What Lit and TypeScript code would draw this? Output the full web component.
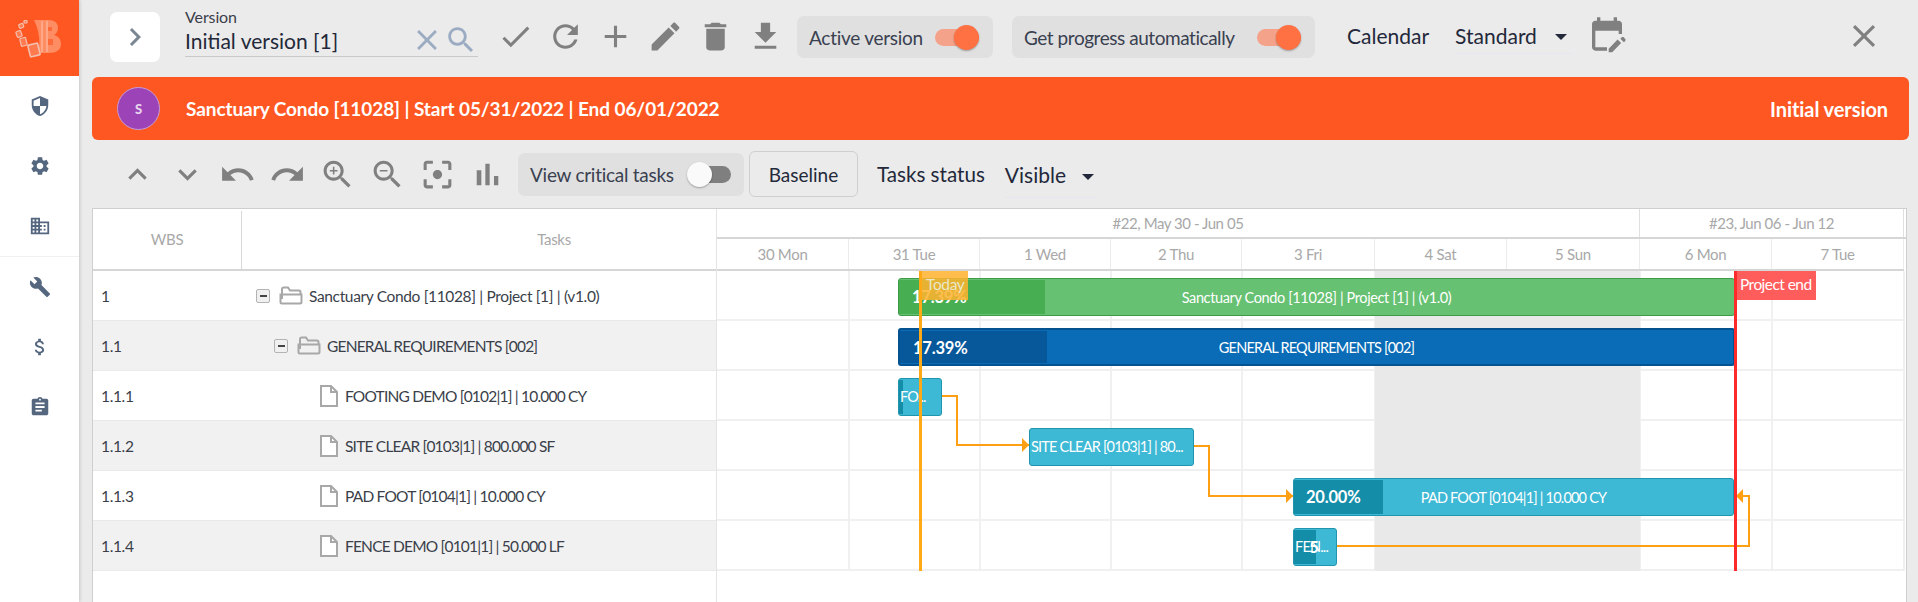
import { LitElement, html, css } from "lit";
import { customElement } from "lit/decorators.js";

const P: Record<string, string> = {
  chevR: "M8.59 16.59L13.17 12 8.59 7.41 10 6l6 6-6 6z",
  up: "M12 8l-6 6 1.41 1.41L12 10.83l4.59 4.58L18 14z",
  down: "M16.59 8.59L12 13.17 7.41 8.59 6 10l6 6 6-6z",
  check: "M21 7L9 19l-5.5-5.5 1.41-1.41L9 16.17 19.59 5.59 21 7z",
  refresh: "M17.65 6.35C16.2 4.9 14.21 4 12 4c-4.42 0-7.99 3.58-7.99 8s3.57 8 7.99 8c3.73 0 6.84-2.55 7.73-6h-2.08c-.82 2.33-3.04 4-5.65 4-3.31 0-6-2.69-6-6s2.69-6 6-6c1.66 0 3.14.69 4.22 1.78L13 11h7V4l-2.35 2.35z",
  plus: "M19 13h-6v6h-2v-6H5v-2h6V5h2v6h6v2z",
  pencil: "M3 17.25V21h3.75L17.81 9.94l-3.75-3.75L3 17.25zM20.71 7.04c.39-.39.39-1.02 0-1.41l-2.34-2.34c-.39-.39-1.02-.39-1.41 0l-1.83 1.83 3.75 3.75 1.83-1.83z",
  trash: "M6 19c0 1.1.9 2 2 2h8c1.1 0 2-.9 2-2V7H6v12zM19 4h-3.5l-1-1h-5l-1 1H5v2h14V4z",
  download: "M19 9h-4V3H9v6H5l7 7 7-7zM5 18v2h14v-2H5z",
  close: "M19 6.41L17.59 5 12 10.59 6.41 5 5 6.41 10.59 12 5 17.59 6.41 19 12 13.41 17.59 19 19 17.59 13.41 12z",
  search: "M15.5 14h-.79l-.28-.27C15.41 12.59 16 11.11 16 9.5 16 5.91 13.09 3 9.5 3S3 5.91 3 9.5 5.91 16 9.5 16c1.61 0 3.09-.59 4.23-1.57l.27.28v.79l5 4.99L20.49 19l-4.99-5zm-6 0C7.01 14 5 11.99 5 9.5S7.01 5 9.5 5 14 7.01 14 9.5 11.99 14 9.5 14z",
  zoomIn: "M15.5 14h-.79l-.28-.27C15.41 12.59 16 11.11 16 9.5 16 5.91 13.09 3 9.5 3S3 5.91 3 9.5 5.91 16 9.5 16c1.61 0 3.09-.59 4.23-1.57l.27.28v.79l5 4.99L20.49 19l-4.99-5zm-6 0C7.01 14 5 11.99 5 9.5S7.01 5 9.5 5 14 7.01 14 9.5 11.99 14 9.5 14zM12 10h-2v2H9v-2H7V9h2V7h1v2h2v1z",
  zoomOut: "M15.5 14h-.79l-.28-.27C15.41 12.59 16 11.11 16 9.5 16 5.91 13.09 3 9.5 3S3 5.91 3 9.5 5.91 16 9.5 16c1.61 0 3.09-.59 4.23-1.57l.27.28v.79l5 4.99L20.49 19l-4.99-5zm-6 0C7.01 14 5 11.99 5 9.5S7.01 5 9.5 5 14 7.01 14 9.5 11.99 14 9.5 14zM7 9h5v1H7z",
  undo: "M12.5 8c-2.65 0-5.05.99-6.9 2.6L2 7v9h9l-3.62-3.62c1.39-1.16 3.16-1.88 5.12-1.88 3.54 0 6.55 2.31 7.6 5.5l2.37-.78C21.08 11.03 17.15 8 12.5 8z",
  redo: "M18.4 10.6C16.55 8.99 14.15 8 11.5 8c-4.65 0-8.58 3.03-9.96 7.22L3.9 16c1.05-3.19 4.05-5.5 7.6-5.5 1.95 0 3.73.72 5.12 1.88L13 16h9V7l-3.6 3.6z",
  focus: "M5 15H3v4c0 1.1.9 2 2 2h4v-2H5v-4zM5 5h4V3H5c-1.1 0-2 .9-2 2v4h2V5zm14-2h-4v2h4v4h2V5c0-1.1-.9-2-2-2zm0 16h-4v2h4c1.1 0 2-.9 2-2v-4h-2v4zM12 9c-1.66 0-3 1.34-3 3s1.34 3 3 3 3-1.34 3-3-1.34-3-3-3z",
  bars: "M5 9.2h3V19H5zM10.6 5h2.8v14h-2.8zm5.6 8H19v6h-2.8z",
  shield: "M12 1L3 5v6c0 5.55 3.84 10.74 9 12 5.16-1.26 9-6.45 9-12V5l-9-4zm0 10.99h7c-.53 4.12-3.28 7.79-7 8.94V12H5V6.3l7-3.11v8.8z",
  gear: "M19.14 12.94c.04-.3.06-.61.06-.94 0-.32-.02-.64-.07-.94l2.03-1.58c.18-.14.23-.41.12-.61l-1.92-3.32c-.12-.22-.37-.29-.59-.22l-2.39.96c-.5-.38-1.03-.7-1.62-.94l-.36-2.54c-.04-.24-.24-.41-.48-.41h-3.84c-.24 0-.43.17-.47.41l-.36 2.54c-.59.24-1.13.57-1.62.94l-2.39-.96c-.22-.08-.47 0-.59.22L2.74 8.87c-.12.21-.08.47.12.61l2.03 1.58c-.05.3-.09.63-.09.94s.02.64.07.94l-2.03 1.58c-.18.14-.23.41-.12.61l1.92 3.32c.12.22.37.29.59.22l2.39-.96c.5.38 1.03.7 1.62.94l.36 2.54c.05.24.24.41.48.41h3.84c.24 0 .44-.17.47-.41l.36-2.54c.59-.24 1.13-.56 1.62-.94l2.39.96c.22.08.47 0 .59-.22l1.92-3.32c.12-.22.07-.47-.12-.61l-2.01-1.58zM12 15.6c-1.98 0-3.6-1.62-3.6-3.6s1.62-3.6 3.6-3.6 3.6 1.62 3.6 3.6-1.62 3.6-3.6 3.6z",
  domain: "M12 7V3H2v18h20V7H12zM6 19H4v-2h2v2zm0-4H4v-2h2v2zm0-4H4V9h2v2zm0-4H4V5h2v2zm4 12H8v-2h2v2zm0-4H8v-2h2v2zm0-4H8V9h2v2zm0-4H8V5h2v2zm10 12h-8v-2h2v-2h-2v-2h2v-2h-2V9h8v10zm-2-8h-2v2h2v-2zm0 4h-2v2h2v-2z",
  wrench: "M22.7 19l-9.1-9.1c.9-2.3.4-5-1.5-6.9-2-2-5-2.4-7.4-1.3L9 6 6 9 1.6 4.7C.4 7.1.9 10.1 2.9 12.1c1.9 1.9 4.6 2.4 6.9 1.5l9.1 9.1c.4.4 1 .4 1.4 0l2.3-2.3c.5-.4.5-1.1.1-1.4z",
  money: "M11.8 10.9c-2.27-.59-3-1.2-3-2.15 0-1.09 1.01-1.85 2.7-1.85 1.78 0 2.44.85 2.5 2.1h2.21c-.07-1.72-1.12-3.3-3.21-3.81V3h-3v2.16c-1.94.42-3.5 1.68-3.5 3.61 0 2.31 1.91 3.46 4.7 4.13 2.5.6 3 1.48 3 2.41 0 .69-.49 1.79-2.7 1.79-2.06 0-2.87-.92-2.98-2.1h-2.2c.12 2.19 1.76 3.42 3.68 3.83V21h3v-2.15c1.95-.37 3.5-1.5 3.5-3.55 0-2.84-2.43-3.81-4.7-4.4z",
  clip: "M19 3h-4.18C14.4 1.84 13.3 1 12 1c-1.3 0-2.4.84-2.82 2H5c-1.1 0-2 .9-2 2v14c0 1.1.9 2 2 2h14c1.1 0 2-.9 2-2V5c0-1.1-.9-2-2-2zm-7 0c.55 0 1 .45 1 1s-.45 1-1 1-1-.45-1-1 .45-1 1-1zm2 14H7v-2h7v2zm3-4H7v-2h10v2zm0-4H7V7h10v2z",
  calEdit: "M5 10h14v2h2V6c0-1.1-.9-2-2-2h-1V2h-2v2H8V2H6v2H5c-1.11 0-1.99.9-1.99 2L3 20c0 1.1.89 2 2 2h7v-2H5V10zM22.84 16.28l-.71.71-2.12-2.12.71-.71c.39-.39 1.02-.39 1.41 0l.71.71c.39.39.39 1.02 0 1.41zM18.36 15.34l2.12 2.12L15.12 23H13v-2.12l5.36-5.54z",
};

const icon = (name: string, cls = "") =>
  html`<svg class="ic ${cls}" viewBox="0 0 24 24"><path d=${P[name]}></path></svg>`;

const toggle = (on: boolean) =>
  html`<span class="toggle ${on ? "on" : "off"}"><span class="track"></span><span class="thumb"></span></span>`;

const rows = [
  { wbs: "1", name: "Sanctuary Condo [11028] | Project [1] | (v1.0)", kind: "folder", indent: 163, caps: false },
  { wbs: "1.1", name: "GENERAL REQUIREMENTS [002]", kind: "folder", indent: 181, caps: true },
  { wbs: "1.1.1", name: "FOOTING DEMO [0102|1] | 10.000 CY", kind: "file", indent: 227, caps: true },
  { wbs: "1.1.2", name: "SITE CLEAR [0103|1] | 800.000 SF", kind: "file", indent: 227, caps: true },
  { wbs: "1.1.3", name: "PAD FOOT [0104|1] | 10.000 CY", kind: "file", indent: 227, caps: true },
  { wbs: "1.1.4", name: "FENCE DEMO [0101|1] | 50.000 LF", kind: "file", indent: 227, caps: true },
];

const days = [
  ["30 Mon", 132], ["31 Tue", 131], ["1 Wed", 131], ["2 Thu", 131], ["3 Fri", 133],
  ["4 Sat", 132], ["5 Sun", 133], ["6 Mon", 132], ["7 Tue", 132],
] as [string, number][];
const dayX = days.reduce<number[]>((a, d) => [...a, a[a.length - 1] + d[1]], [0]);

const bars = [
  { cls: "green", x: 181, w: 837, row: 0, prog: 146, pct: "17.39%", pctX: 13, label: "Sanctuary Condo [11028] | Project [1] | (v1.0)", caps: false },
  { cls: "blue", x: 181, w: 837, row: 1, prog: 147, pct: "17.39%", pctX: 13, label: "GENERAL REQUIREMENTS [002]", caps: true },
  { cls: "cyan", x: 181, w: 44, row: 2, prog: 4, left: "FO...", caps: true },
  { cls: "cyan", x: 312, w: 165, row: 3, prog: 0, left: "SITE CLEAR [0103|1] | 80...", caps: true },
  { cls: "cyan", x: 576, w: 441, row: 4, prog: 89, pct: "20.00%", pctX: 12, label: "PAD FOOT [0104|1] | 10.000 CY", caps: true },
  { cls: "cyan", x: 576, w: 44, row: 5, prog: 22, left: "FEN...", over: "5", caps: true },
];

@customElement("app-root")
export class AppRoot extends LitElement {
  static styles = css`
    :host {
      display: flex; width: 1918px; height: 602px; overflow: hidden;
      background: #ebebeb; font-family: Lato, "Open Sans", sans-serif; color: #2c3240;
    }
    * { box-sizing: border-box; }
    .ic { display: block; fill: currentColor; flex: none; }

    .side { width: 79px; flex: none; background: #fff; box-shadow: 1px 0 3px rgba(0,0,0,.16); z-index: 2; }
    .logo { height: 76px; background: #ff5722; display: flex; }
    .logo svg { width: 79px; height: 76px; filter: blur(.5px); }
    .side-item { height: 60px; display: flex; align-items: center; justify-content: center; color: #55677f; }
    .side-item .ic { width: 22px; height: 22px; }
    .side-group { border-bottom: 1px solid #f0f0f0; }

    .main { flex: 1; min-width: 0; display: flex; flex-direction: column; padding: 0 9px 0 13px; }

    .top { height: 77px; flex: none; display: flex; align-items: flex-start; padding-left: 18px; }
    .expand { width: 50px; height: 50px; margin-top: 12px; background: #fff; border-radius: 7px; display: flex; align-items: center; justify-content: center; color: #7c8794; }
    .expand .ic { width: 36px; height: 36px; }
    .version { width: 293px; margin-left: 25px; height: 57px; border-bottom: 1px solid #c9c9c9; position: relative; padding-top: 8px; }
    .version .lbl { font-size: 16px; line-height: 18px; color: #3a3f4a; letter-spacing: -.1px; }
    .version .val { font-size: 21px; line-height: 26px; margin-top: 2px; color: #23283a; }
    .version .acts { position: absolute; right: 0; top: 23px; display: flex; color: #9aabc2; gap: 0; }
    .version .acts .ic { width: 34px; height: 34px; }
    .tools { display: flex; margin-left: 12px; color: #808080; padding-top: 11px; }
    .slot { width: 50px; height: 50px; display: flex; align-items: center; justify-content: center; }
    .slot .ic { width: 37px; height: 37px; }
    .pill { height: 42px; margin-top: 16px; background: #e0e0e0; border-radius: 7px; display: flex; align-items: center; padding: 0 0 0 12px; font-size: 19px; letter-spacing: -.27px; color: #3a4050; }
    .pill.a { width: 196px; margin-left: 7px; }
    .pill.b { width: 303px; margin-left: 19px; letter-spacing: -.45px; }
    .toggle { position: relative; width: 44px; height: 25px; flex: none; display: block; margin-left: auto; margin-right: 14px; }
    .track { position: absolute; left: 0; right: 0; top: 4px; height: 17px; border-radius: 9px; }
    .thumb { position: absolute; top: 0; width: 25px; height: 25px; border-radius: 50%; box-shadow: 0 1px 2px rgba(0,0,0,.3); }
    .on .track { background: #f4a38a; }
    .on .thumb { background: #ff7043; right: 0; }
    .off .track { background: #7f7f7f; }
    .off .thumb { background: #fafafa; left: 0; }
    .txt { font-size: 21px; line-height: 24px; color: #23283a; }
    .cal { margin-left: 32px; margin-top: 24px; }
    .sel { position: relative; height: 36px; display: flex; align-items: center; border-bottom: 1px solid #e6e6f0; font-size: 21px; color: #23283a; }
    .sel.s1 { width: 117px; margin-left: 26px; margin-top: 18px; }
    .arrow { position: absolute; right: 5px; top: 16px; width: 0; height: 0; border-left: 6px solid transparent; border-right: 6px solid transparent; border-top: 6px solid #23283a; }
    .calicon { margin-left: 15px; margin-top: 14px; color: #808080; }
    .calicon .ic { width: 40px; height: 40px; }
    .x { margin-left: auto; margin-right: 26px; margin-top: 17px; color: #808080; }
    .x .ic { width: 38px; height: 38px; }

    .banner { height: 63px; flex: none; background: #ff5722; border-radius: 6px; display: flex; align-items: center; padding: 0 21px 0 25px; color: #fff; font-weight: 700; font-size: 19px; letter-spacing: -.08px; }
    .avatar { width: 43px; height: 43px; border-radius: 50%; background: #9c43b8; border: 1px solid #c79bd6; display: flex; align-items: center; justify-content: center; font-size: 13px; font-weight: 900; color: #e8d5ee; margin-right: 26px; }
    .grow { flex: 1; }
    .ban-r { font-size: 20px; }

    .tb2 { height: 68px; flex: none; display: flex; align-items: center; padding-left: 20px; color: #808080; }
    .pill.c { width: 226px; height: 43px; margin: 0 0 0 6px; flex: none; }
    .pill.c .toggle { width: 44px; margin-right: 13px; }
    .pill.c .track { top: 4px; left: 8px; }
    .btn { width: 109px; height: 46px; margin-left: 5px; border: 1px solid #cfcfcf; border-radius: 6px; display: flex; align-items: center; justify-content: center; font-size: 19px; color: #23283a; }
    .tb2 .txt { margin-left: 19px; font-size: 20.6px; }
    .sel.s2 { width: 93px; height: 46px; margin-left: 20px; margin-top: 1px; }
    .sel.s2 .arrow { top: 22px; right: 4px; }

    .gantt { flex: 1; min-height: 0; background: #fff; border: 1px solid #cfcfcf; border-bottom: 0; display: flex; margin-right: 2px; }
    .left { width: 624px; flex: none; border-right: 1px solid #e4e4e4; }
    .lhead { height: 62px; display: flex; border-bottom: 2px solid #d6d6d6; color: #a8a8a8; font-size: 15px; letter-spacing: -.3px; }
    .lhead > div { display: flex; align-items: center; justify-content: center; }
    .c-wbs { width: 149px; border-right: 1px solid #d8d8d8; margin-top: 2px; padding-bottom: 2px; }
    .c-task { flex: 1; padding-left: 150px; }
    .row { height: 50px; display: flex; align-items: center; border-bottom: 1px solid #e9e9e9; font-size: 15.5px; letter-spacing: -.35px; color: #3a3f4a; position: relative; }
    .row.caps .t { letter-spacing: -.8px; }
    .row:nth-child(even) { background: #f1f1f1; }
    .row .w { position: absolute; left: 8px; }
    .row .t { display: flex; align-items: center; white-space: nowrap; }
    .minus { width: 14px; height: 14px; border: 1.5px solid #b4b4b4; border-radius: 2px; background: #f0f0f0; display: flex; align-items: center; justify-content: center; margin-right: 9px; }
    .minus::after { content: ""; width: 7px; height: 2px; background: #444; }
    .folder { width: 24px; height: 19px; margin-right: 6px; fill: none; stroke: #a8a8a8; stroke-width: 2; }
    .file { width: 18px; height: 22px; margin-right: 7px; fill: #fff; stroke: #a8a8a8; stroke-width: 2; }

    .right { flex: 1; min-width: 0; }
    .weeks { height: 30px; display: flex; border-bottom: 2px solid #d6d6d6; color: #a8a8a8; font-size: 15px; letter-spacing: -.45px; }
    .weeks > div { display: flex; align-items: center; justify-content: center; }
    .w1 { width: 923px; border-right: 1px solid #e0e0e0; }
    .w2 { width: 264px; border-right: 1px solid #e0e0e0; }
    .dayrow { height: 32px; display: flex; border-bottom: 2px solid #d6d6d6; width: 1187px; }
    .dayrow > div { display: flex; align-items: center; justify-content: center; border-right: 1px solid #ececec; color: #a8a8a8; font-size: 15px; letter-spacing: -.3px; }
    .canvas { position: relative; height: 300px; }
    .line-h { height: 50px; border-bottom: 2px solid #f0f0f0; width: 1187px; }
    .line-v { position: absolute; top: 0; bottom: 0; width: 2px; background: #f0f0f0; }
    .weekend { position: absolute; top: 0; bottom: 0; left: 658px; width: 265px; background: #e8e8e8; opacity: .96; }
    .bar { position: absolute; height: 38px; border-radius: 3px; border: 1px solid; overflow: hidden; color: #fff; font-size: 14.5px; letter-spacing: -.37px; display: flex; align-items: center; justify-content: center; white-space: nowrap; }
    .bar.caps { letter-spacing: -.8px; }
    .bar .prog { position: absolute; left: 0; top: 1px; bottom: 1px; }
    .bar .pct { position: absolute; font-weight: 700; font-size: 16.5px; letter-spacing: -.2px; top: 7px; line-height: 22px; }
    .bar .lab { position: relative; }
    .bar .lft { position: absolute; left: 1px; top: 7px; line-height: 22px; }
    .bar .ovr { position: absolute; left: 15px; top: 7px; line-height: 22px; font-weight: 700; font-size: 17px; }
    .green { background: #66c172; border-color: #3f9a4a; border-width: 1.5px; }
    .green .prog { background: #48ae52; }
    .blue { background: #0a6cb6; border-color: #04528f; border-width: 2px; }
    .blue .prog { background: #06589b; }
    .cyan { background: #3db8d5; border-color: #2295ae; }
    .cyan .prog { background: #148da8; }
    .tag { position: absolute; top: 0; height: 29px; font-size: 15.5px; letter-spacing: -.35px; line-height: 26px; white-space: nowrap; }
    .today-tag { left: 203px; width: 48px; background: rgba(255,178,48,.86); color: #eae8c8; padding-left: 6px; }
    .end-tag { left: 1018px; width: 81px; background: #ff5c5c; color: #fff; padding-left: 5px; letter-spacing: -.55px; }
    .vline { position: absolute; top: 0; height: 300px; width: 3px; }
    .today { left: 202px; background: #ffa916; }
    .end { left: 1017px; background: #ff2b2b; }
    .links { position: absolute; left: 0; top: 0; width: 1188px; height: 300px; fill: none; stroke: #ff9f14; stroke-width: 2; overflow: visible; }
    .links polygon { fill: #ff9f14; stroke: none; }
  `;

  render() {
    return html`
      <aside class="side">
        <div class="logo">
          <svg viewBox="0 0 79 76">
            <path d="M34 20h14c7 0 10 3 10 8 0 3-2 6-4 7 4 1 7 4 7 9 0 6-5 9-12 9H38c3-10 1-23-4-33z" fill="#ff8d64"></path>
            <path d="M42 21v31M47 21v31" stroke="#ffa888" stroke-width="2" fill="none"></path>
            <path d="M48 27h4v4h-4zM48 39h5v6h-5z" fill="#ff6a3a"></path>
            <g fill="#ff7a4e" stroke="#f3bfae" stroke-width="1.2">
              <rect x="29" y="44" width="10" height="12" rx="1" transform="rotate(-14 34 50)" stroke-width="1.6"></rect>
              <rect x="20.5" y="38" width="6" height="8" rx="1" transform="rotate(-14 23 42)"></rect>
              <rect x="16.5" y="31" width="5" height="6" rx="1" transform="rotate(-20 19 34)"></rect>
              <rect x="19" y="24" width="4.5" height="4" rx="1" transform="rotate(-24 21 26)"></rect>
              <rect x="24" y="20.5" width="3" height="2.500" rx=".6"></rect>
            </g>
          </svg>
        </div>
        <div class="side-group">
          <div class="side-item">${icon("shield")}</div>
          <div class="side-item">${icon("gear")}</div>
          <div class="side-item">${icon("domain")}</div>
        </div>
        <div class="side-item">${icon("wrench")}</div>
        <div class="side-item">${icon("money")}</div>
        <div class="side-item">${icon("clip")}</div>
      </aside>

      <div class="main">
        <div class="top">
          <div class="expand">${icon("chevR")}</div>
          <div class="version">
            <div class="lbl">Version</div>
            <div class="val">Initial version [1]</div>
            <div class="acts">${icon("close")}${icon("search")}</div>
          </div>
          <div class="tools">
            ${["check", "refresh", "plus", "pencil", "trash", "download"].map((n) => html`<div class="slot">${icon(n)}</div>`)}
          </div>
          <div class="pill a">Active version ${toggle(true)}</div>
          <div class="pill b">Get progress automatically ${toggle(true)}</div>
          <div class="txt cal">Calendar</div>
          <div class="sel s1">Standard<span class="arrow"></span></div>
          <div class="calicon">${icon("calEdit")}</div>
          <div class="x">${icon("close")}</div>
        </div>

        <div class="banner">
          <div class="avatar">S</div>
          <div>Sanctuary Condo [11028] | Start 05/31/2022 | End 06/01/2022</div>
          <div class="grow"></div>
          <div class="ban-r">Initial version</div>
        </div>

        <div class="tb2">
          ${["up", "down", "undo", "redo", "zoomIn", "zoomOut", "focus", "bars"].map((n) => html`<div class="slot">${icon(n)}</div>`)}
          <div class="pill c">View critical tasks ${toggle(false)}</div>
          <div class="btn">Baseline</div>
          <div class="txt">Tasks status</div>
          <div class="sel s2">Visible<span class="arrow"></span></div>
        </div>

        <div class="gantt">
          <div class="left">
            <div class="lhead"><div class="c-wbs">WBS</div><div class="c-task">Tasks</div></div>
            <div>
              ${rows.map((r) => html`
                <div class="row ${r.caps ? "caps" : ""}">
                  <span class="w">${r.wbs}</span>
                  <span class="t" style="margin-left:${r.indent}px">
                    ${r.kind === "folder"
                      ? html`<span class="minus"></span>
                          <svg class="folder" viewBox="0 0 24 19"><path d="M3 13V3a1.5 1.5 0 0 1 1.5-1.5H9l2 3h9A1.5 1.5 0 0 1 21.500 6v2"></path><path d="M1.500 8.500h21V16a1.500 1.500 0 0 1-1.500 1.500H3A1.500 1.500 0 0 1 1.500 16z"></path></svg>`
                      : html`<svg class="file" viewBox="0 0 18 22"><path d="M1 1h10l6 6v14H1z"></path><path d="M11 1v6h6" fill="none"></path></svg>`}
                    ${r.name}
                  </span>
                </div>`)}
            </div>
          </div>
          <div class="right">
            <div class="weeks"><div class="w1">#22, May 30 - Jun 05</div><div class="w2">#23, Jun 06 - Jun 12</div></div>
            <div class="dayrow">${days.map(([d, w]) => html`<div style="width:${w}px">${d}</div>`)}</div>
            <div class="canvas">
              ${rows.map(() => html`<div class="line-h"></div>`)}
              ${dayX.slice(1).map((x) => html`<div class="line-v" style="left:${x - 1}px"></div>`)}
              <div class="weekend"></div>
              ${bars.map((b) => html`
                <div class="bar ${b.cls} ${b.caps ? "caps" : ""}" style="left:${b.x}px;width:${b.w}px;top:${b.row * 50 + 7}px">
                  ${b.prog ? html`<div class="prog" style="width:${b.prog}px"></div>` : ""}
                  ${b.pct ? html`<span class="pct" style="left:${b.pctX}px">${b.pct}</span>` : ""}
                  ${b.label ? html`<span class="lab">${b.label}</span>` : ""}
                  ${b.left ? html`<span class="lft">${b.left}</span>` : ""}
                  ${b.over ? html`<span class="ovr">${b.over}</span>` : ""}
                </div>`)}
              <svg class="links" viewBox="0 0 1188 300">
                <path d="M225 125h15v49h72"></path><polygon points="305,167 312,174 305,181"></polygon>
                <path d="M477 175h15v50h84"></path><polygon points="569,218 576,225 569,232"></polygon>
                <path d="M620 275h412v-50h-13"></path><polygon points="1026,218 1019,225 1026,232"></polygon>
              </svg>
              <div class="tag today-tag">Today</div>
              <div class="tag end-tag">Project end</div>
              <div class="vline today"></div>
              <div class="vline end"></div>
            </div>
          </div>
        </div>
      </div>
    `;
  }
}
